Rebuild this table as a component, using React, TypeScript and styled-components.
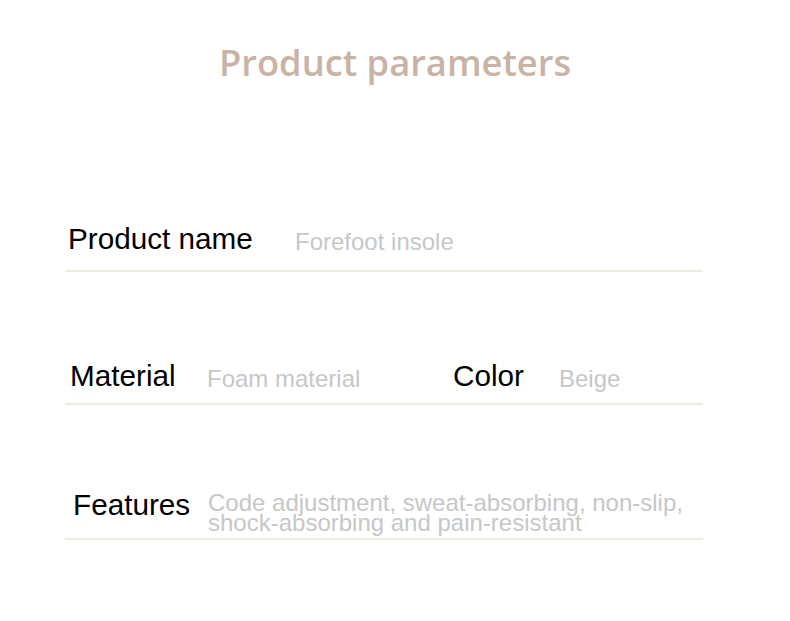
import styled, { createGlobalStyle } from "styled-components";

const GlobalStyle = createGlobalStyle`
  body {
    margin: 0;
    background: #ffffff;
  }
`

const Page = styled.div`
  width: 790px;
  height: 621px;
  padding-top: 44px;
  box-sizing: border-box;
  background: #ffffff;
`

const Title = styled.h1`
  margin: 0 0 145px;
  font-family: "Open Sans", "Noto Sans", sans-serif;
  font-weight: 600;
  font-size: 36.3px;
  line-height: 36px;
  color: #c9b3a4;
  text-align: center;
`

const Table = styled.div`
  margin-left: 65px;
  width: 638px;
`

const Row = styled.div<{$height:number,$padbottom:number,$margintop:number}>`
  display: flex;
  align-items: flex-end;
  box-sizing: border-box;
  height: ${({$height})=>$height}px;
  margin-top: ${({$margintop})=>$margintop}px;
  padding-bottom: ${({$padbottom})=>$padbottom}px;
  border-bottom: 2px solid #efebe1;
`

const Field = styled.div<{$left:number,$width?:number}>`
  display: flex;
  align-items: flex-end;
  margin-left: ${({$left})=>$left}px;
  width: ${({$width})=>$width ? `${$width}px` : "auto"};
  flex-shrink: 0;
`

const Label = styled.div<{$width:number,$lift?:number}>`
  width: ${({$width})=>$width}px;
  flex-shrink: 0;
  margin-bottom: ${({$lift})=>$lift ?? 0}px;
  font-family: "Liberation Sans", Arial, sans-serif;
  font-size: 29.7px;
  line-height: 1;
  color: #000000;
  white-space: nowrap;
`

const Value = styled.div<{$lineheight?:number}>`
  font-family: "Liberation Sans", Arial, sans-serif;
  font-size: 24px;
  line-height: ${({$lineheight})=>$lineheight ? `${$lineheight}px` : 1};
  color: #c7c7c7;
`

export default function App() {
  return (
    <Page>
      <GlobalStyle />
      <Title>Product parameters</Title>
      <Table>
        <Row $height={47} $padbottom={16} $margintop={0}>
          <Field $left={3}>
            <Label $width={227}>Product name</Label>
            <Value>Forefoot insole</Value>
          </Field>
        </Row>
        <Row $height={47} $padbottom={12} $margintop={86}>
          <Field $left={5} $width={383}>
            <Label $width={137}>Material</Label>
            <Value>Foam material</Value>
          </Field>
          <Field $left={0}>
            <Label $width={106}>Color</Label>
            <Value>Beige</Value>
          </Field>
        </Row>
        <Row $height={52} $padbottom={5} $margintop={83}>
          <Field $left={8}>
            <Label $width={135} $lift={13}>Features</Label>
            <Value $lineheight={20}>
              Code adjustment, sweat-absorbing, non-slip,<br />
              shock-absorbing and pain-resistant
            </Value>
          </Field>
        </Row>
      </Table>
    </Page>
  )
}
